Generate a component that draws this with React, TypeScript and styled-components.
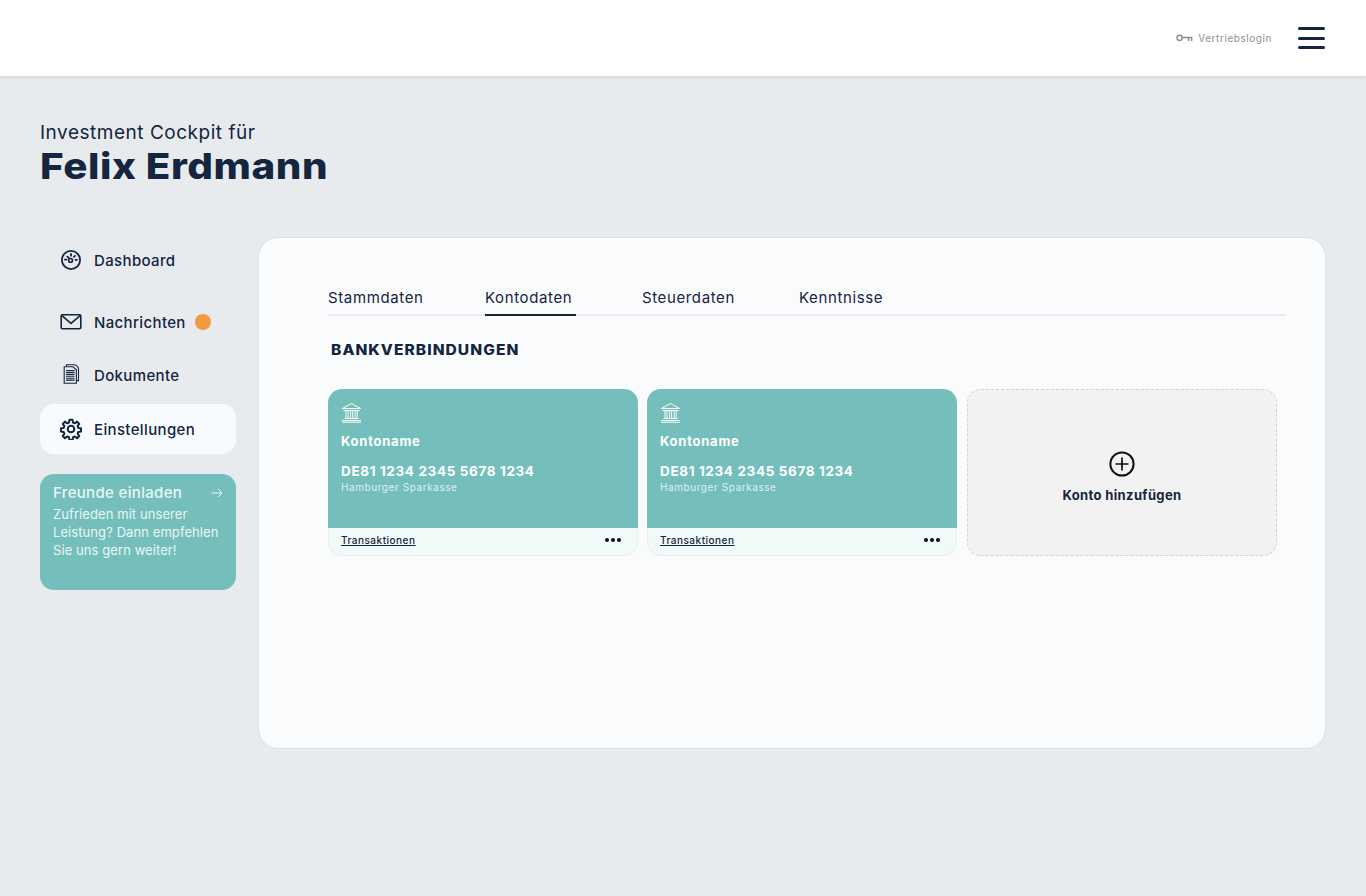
import { ReactNode } from 'react';
import styled, { createGlobalStyle } from 'styled-components';

const NAVY = '#14253f';
const TEAL = '#74bfbb';

const GlobalStyle = createGlobalStyle`
  html, body {
    margin: 0;
    padding: 0;
    background: #e7ebee;
    color: ${NAVY};
    font-family: Inter, "Liberation Sans", sans-serif;
  }
  * { box-sizing: border-box; }
`;

const DashboardIcon = () => (
  <svg width="22" height="22" viewBox="0 0 22 22" fill="none" stroke={NAVY} strokeWidth="1.8">
    <circle cx="11" cy="11" r="9.1" />
    <circle cx="10.6" cy="11.4" r="1.9" strokeWidth="1.6" />
    <path d="M9.2 9.4 7.4 7.6M11 4.9v1.8M15 6.9l-1.1 1M4.9 10.6h1.6M15.5 10.8H17" strokeLinecap="round" />
  </svg>
);

const MailIcon = () => (
  <svg width="22" height="18" viewBox="0 0 22 18" fill="none" stroke={NAVY} strokeWidth="1.6">
    <rect x="1.2" y="1.8" width="19.6" height="14" rx="1.2" />
    <path d="M1.6 2.4 11 10.4l9.4-8" />
  </svg>
);

const DocumentIcon = () => (
  <svg width="22" height="22" viewBox="0 0 22 22" fill="none" stroke={NAVY} strokeWidth="1.1">
    <path d="M6.5 2.6V0.8h7.5c2.2 0 4.5 2 4.5 4.2v11.6h-2" />
    <path d="M4.2 2.8H13l3.4 3v13.4H4.2z" fill="#e7ebee" />
    <path d="M6 6.6h8.6M6 8.5h8.6M6 10.4h8.6M6 12.3h8.6M6 14.2h8.6M6 16.1h8.6" />
  </svg>
);

const GearIcon = () => (
  <svg width="22" height="22" viewBox="0 0 24 24" fill="none" stroke={NAVY} strokeWidth="2.2" strokeLinejoin="round">
    <path d="M10.3 2h3.4l.5 3 1.9.8 2.5-1.8 2.4 2.4-1.8 2.5.8 1.9 3 .5v3.4l-3 .5-.8 1.9 1.8 2.5-2.4 2.4-2.5-1.8-1.9.8-.5 3h-3.4l-.5-3-1.9-.8-2.5 1.8-2.4-2.4 1.8-2.5-.8-1.9-3-.5v-3.4l3-.5.8-1.9-1.8-2.5 2.4-2.4 2.5 1.8 1.9-.8z" />
    <circle cx="12" cy="12" r="3.6" />
  </svg>
);

const KeyIcon = () => (
  <svg width="17" height="8" viewBox="0 0 17 8" fill="none" stroke="#8f8f8f" strokeWidth="1.5">
    <circle cx="3.6" cy="3.8" r="2.6" />
    <path d="M6.2 3.6H16.4M12.5 3.6v3.4M15.6 3.6v3.4" />
  </svg>
);

const BankIcon = () => (
  <svg width="21" height="21" viewBox="0 0 21 21" fill="none" stroke="#fff" strokeWidth="1">
    <path d="M1.5 6.5 10.5 1.5l9 5z" />
    <path d="M2.5 8.5h16M3.5 16.5h14M1 18.5h19M1 20.2h19" />
    <path d="M5 9v7M7 9v7M9.6 9v7M11.6 9v7M14.2 9v7M16.2 9v7" strokeWidth="0.9" />
  </svg>
);

const PlusCircleIcon = () => (
  <svg width="26" height="26" viewBox="0 0 26 26" fill="none" stroke="#0c0f14" strokeWidth="2">
    <circle cx="13" cy="13" r="11.6" />
    <path d="M13 6.5v13M6.5 13h13" strokeWidth="1.7" />
  </svg>
);

const ArrowIcon = () => (
  <svg width="12" height="10" viewBox="0 0 12 10" fill="none" stroke="#e9f6f5" strokeWidth="1">
    <path d="M0.5 5h10.5M7 1l4 4-4 4" />
  </svg>
);

const Header = styled.header`
  height: 76px;
  background: #fff;
  box-shadow: 0 1px 4px rgba(20, 37, 63, 0.12);
  display: flex;
  align-items: center;
  justify-content: flex-end;
  padding-right: 41px;
`;

const LoginLink = styled.a`
  display: flex;
  align-items: center;
  gap: 5px;
  font-size: 10px;
  letter-spacing: 0.56px;
  color: #8f8f8f;
  margin-right: 26px;
`;

const Burger = styled.button`
  width: 27px;
  height: 22px;
  padding: 0;
  border: 0;
  background: none;
  display: flex;
  flex-direction: column;
  justify-content: space-between;

  span {
    display: block;
    height: 3px;
    border-radius: 2px;
    background: ${NAVY};
  }
`;

const Page = styled.main`
  padding: 45px 40px 147px;
`;

const Intro = styled.p`
  margin: 0;
  font-size: 19px;
  line-height: 24px;
  letter-spacing: 0.52px;
`;

const Name = styled.h1`
  width: fit-content;
  margin: 0 0 48px;
  font-size: 36px;
  line-height: 42px;
  font-weight: 800;
  letter-spacing: 0.5px;
  transform: scaleX(1.12);
  transform-origin: left center;
`;

const Columns = styled.div`
  display: grid;
  grid-template-columns: 196px 1068px;
  column-gap: 22px;
  align-items: start;
`;

const Sidebar = styled.nav`
  display: flex;
  flex-direction: column;
`;

const NavItem = styled.a<{ $active?: boolean; $gapBelow: number }>`
  display: flex;
  align-items: center;
  height: 50px;
  padding-left: 20px;
  margin-bottom: ${(p) => p.$gapBelow}px;
  border-radius: 14px;
  background: ${(p) => (p.$active ? '#f8fbfd' : 'transparent')};
  font-size: 15px;
  letter-spacing: 0.36px;
  font-weight: 500;
`;

const NavIcon = styled.span`
  width: 22px;
  height: 22px;
  margin-right: 12px;
  display: flex;
  align-items: center;
  justify-content: center;
`;

const Dot = styled.span`
  width: 16px;
  height: 16px;
  margin-left: 9px;
  border-radius: 50%;
  background: #f39a41;
`;

const InviteCard = styled.a`
  height: 116px;
  padding: 9px 13px;
  border-radius: 14px;
  background: ${TEAL};
  color: #e9f6f5;
`;

const InviteTitle = styled.div`
  display: flex;
  align-items: center;
  justify-content: space-between;
  font-size: 15px;
  line-height: 19px;
  font-weight: 500;
  letter-spacing: 0.33px;
`;

const InviteText = styled.p`
  margin: 3px 0 0;
  font-size: 13px;
  line-height: 18px;
  letter-spacing: 0.08px;
`;

const Panel = styled.section`
  height: 512px;
  margin-top: 2px;
  padding: 46px 39px 0 69px;
  border: 1px solid #dde1e4;
  border-radius: 20px;
  background: #f9fbfd;
`;

const Tabs = styled.div`
  display: grid;
  grid-template-columns: repeat(4, 157px);
  height: 32px;
  border-bottom: 2px solid #e9ebee;
`;

const Tab = styled.a<{ $active?: boolean }>`
  justify-self: start;
  height: 32px;
  padding-right: 4px;
  font-size: 15px;
  line-height: 28px;
  letter-spacing: 0.62px;
  font-weight: 400;
  border-bottom: 2px solid ${(p) => (p.$active ? NAVY : 'transparent')};
`;

const SectionTitle = styled.h2`
  width: fit-content;
  margin: 25px 0 30px 3px;
  font-size: 14px;
  line-height: 18px;
  font-weight: 800;
  letter-spacing: 0.95px;
  transform: scaleX(1.11);
  transform-origin: left center;
`;

const CardRow = styled.div`
  display: flex;
  gap: 9px;
`;

const AccountCard = styled.article`
  width: 310px;
  height: 167px;
  border-radius: 14px;
  overflow: hidden;
  display: flex;
  flex-direction: column;
  background: #f0faf8;
`;

const CardBody = styled.div`
  height: 139px;
  padding: 13px 13px 0;
  background: ${TEAL};
  color: #fff;

  svg { display: block; }
`;

const AccountName = styled.div`
  margin-top: 10px;
  font-size: 13px;
  line-height: 16px;
  font-weight: 700;
  letter-spacing: 0.75px;
`;

const Iban = styled.div`
  margin-top: 14px;
  font-size: 13.5px;
  line-height: 16px;
  font-weight: 700;
  letter-spacing: 0.63px;
`;

const BankName = styled.div`
  margin-top: 1px;
  font-size: 10px;
  line-height: 14px;
  letter-spacing: 0.57px;
  color: #dff1f0;
`;

const CardFooter = styled.div`
  flex: 1;
  display: flex;
  align-items: center;
  justify-content: space-between;
  padding: 0 16px 3px 13px;
  font-size: 10px;
  letter-spacing: 0.5px;
  border: 1px solid #e6efed;
  border-top: 0;
  border-radius: 0 0 14px 14px;

  a { text-decoration: underline; font-weight: 500; margin-left: -1px; }
`;

const MoreDots = styled.span`
  display: flex;
  gap: 1.5px;

  i {
    width: 4.5px;
    height: 4.5px;
    border-radius: 50%;
    background: #0c0f14;
  }
`;

const AddCard = styled.button`
  width: 310px;
  height: 167px;
  margin-left: 1px;
  padding: 8px 0 0;
  border: 1px dashed #d2d4d6;
  border-radius: 14px;
  background: #f2f2f2;
  color: ${NAVY};
  font-family: inherit;
  font-size: 13px;
  font-weight: 700;
  letter-spacing: 0.37px;
  display: flex;
  flex-direction: column;
  align-items: center;
  justify-content: center;
  gap: 10px;
`;

const navItems: { label: string; icon: ReactNode; gapBelow: number; dot?: boolean; active?: boolean }[] = [
  { label: 'Dashboard', icon: <DashboardIcon />, gapBelow: 12 },
  { label: 'Nachrichten', icon: <MailIcon />, gapBelow: 3, dot: true },
  { label: 'Dokumente', icon: <DocumentIcon />, gapBelow: 4 },
  { label: 'Einstellungen', icon: <GearIcon />, gapBelow: 20, active: true },
];

const tabs = ['Stammdaten', 'Kontodaten', 'Steuerdaten', 'Kenntnisse'];

const Account = () => (
  <AccountCard>
    <CardBody>
      <BankIcon />
      <AccountName>Kontoname</AccountName>
      <Iban>DE81 1234 2345 5678 1234</Iban>
      <BankName>Hamburger Sparkasse</BankName>
    </CardBody>
    <CardFooter>
      <a>Transaktionen</a>
      <MoreDots>
        <i />
        <i />
        <i />
      </MoreDots>
    </CardFooter>
  </AccountCard>
);

const App = () => (
  <>
    <GlobalStyle />
    <Header>
      <LoginLink>
        <KeyIcon />
        Vertriebslogin
      </LoginLink>
      <Burger aria-label="Menü">
        <span />
        <span />
        <span />
      </Burger>
    </Header>
    <Page>
      <Intro>Investment Cockpit für</Intro>
      <Name>Felix Erdmann</Name>
      <Columns>
        <Sidebar>
          {navItems.map((item) => (
            <NavItem key={item.label} $active={item.active} $gapBelow={item.gapBelow}>
              <NavIcon>{item.icon}</NavIcon>
              {item.label}
              {item.dot && <Dot />}
            </NavItem>
          ))}
          <InviteCard>
            <InviteTitle>
              Freunde einladen
              <ArrowIcon />
            </InviteTitle>
            <InviteText>
              Zufrieden mit unserer
              <br />
              Leistung? Dann empfehlen
              <br />
              Sie uns gern weiter!
            </InviteText>
          </InviteCard>
        </Sidebar>
        <Panel>
          <Tabs>
            {tabs.map((tab) => (
              <Tab key={tab} $active={tab === 'Kontodaten'}>
                {tab}
              </Tab>
            ))}
          </Tabs>
          <SectionTitle>BANKVERBINDUNGEN</SectionTitle>
          <CardRow>
            <Account />
            <Account />
            <AddCard>
              <PlusCircleIcon />
              Konto hinzufügen
            </AddCard>
          </CardRow>
        </Panel>
      </Columns>
    </Page>
  </>
);

export default App;
